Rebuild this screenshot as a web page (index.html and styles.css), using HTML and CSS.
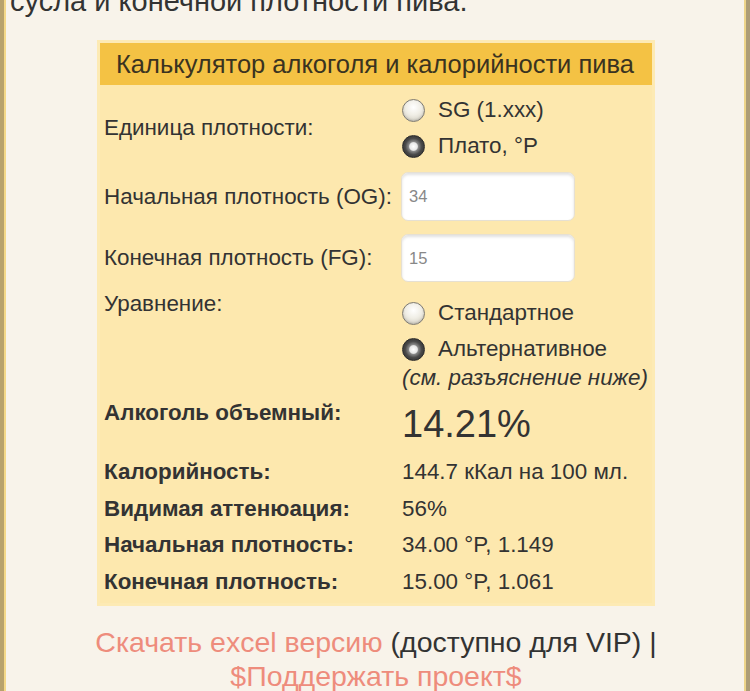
FILE: index.html
```html
<!DOCTYPE html>
<html lang="ru">
<head>
<meta charset="utf-8">
<link rel="stylesheet" href="styles.css">
</head>
<body>
<div class="frame">
  <div class="inner">
    <p class="intro">сусла и конечной плотности пива.</p>
    <div class="calc">
      <div class="calc-head">Калькулятор алкоголя и калорийности пива</div>
      <div class="calc-body">
        <div class="row row-unit">
          <div class="lbl lbl-center">Единица плотности:</div>
          <div class="val">
            <label class="opt"><input type="radio" name="u" class="radio"> SG (1.xxx)</label>
            <label class="opt"><input type="radio" name="u" class="radio" checked> Плато, °P</label>
          </div>
        </div>
        <div class="row row-og">
          <div class="lbl lbl-center">Начальная плотность (OG):</div>
          <div class="val"><input type="text" class="field field-og" value="34"></div>
        </div>
        <div class="row row-fg">
          <div class="lbl lbl-center">Конечная плотность (FG):</div>
          <div class="val"><input type="text" class="field" value="15"></div>
        </div>
        <div class="row row-eq">
          <div class="lbl lbl-top">Уравнение:</div>
          <div class="val val-eq">
            <label class="opt"><input type="radio" name="e" class="radio"> Стандартное</label>
            <label class="opt"><input type="radio" name="e" class="radio" checked> Альтернативное</label>
            <div class="note">(см. разъяснение ниже)</div>
          </div>
        </div>
        <div class="row row-abv">
          <div class="lbl lbl-top bold">Алкоголь объемный:</div>
          <div class="val big">14.21%</div>
        </div>
        <div class="results">
          <div class="row res"><div class="lbl bold">Калорийность:</div><div class="val">144.7 кКал на 100 мл.</div></div>
          <div class="row res"><div class="lbl bold">Видимая аттенюация:</div><div class="val">56%</div></div>
          <div class="row res"><div class="lbl bold">Начальная плотность:</div><div class="val">34.00 °P, 1.149</div></div>
          <div class="row res"><div class="lbl bold">Конечная плотность:</div><div class="val">15.00 °P, 1.061</div></div>
        </div>
      </div>
    </div>
    <p class="links"><a href="#" class="link">Скачать excel версию</a> (доступно для VIP) |<br><a href="#" class="link">$Поддержать проект$</a></p>
  </div>
</div>
</body>
</html>
```

FILE: styles.css
```css
html, body {
  margin: 0;
  padding: 0;
  height: 100%;
  overflow: hidden;
}
body {
  background: #f8f3ea;
  font-family: "Liberation Sans", Arial, sans-serif;
  color: #333;
}
.frame {
  min-height: 100%;
  border-left: 4px solid #b8a26c;
  border-right: 4px solid #ac9c76;
  box-sizing: border-box;
}
.inner {
  min-height: 691px;
  border-left: 2px solid #f4d888;
  border-right: 2px solid #edd48a;
  background: #f8f3ea;
  padding-left: 5px;
  padding-right: 3px;
  box-sizing: border-box;
}
.intro {
  margin: -17px 0 21px -1px;
  font-size: 29px;
  line-height: 36px;
  color: #333;
  white-space: nowrap;
}
.calc {
  width: 552px;
  margin: 0 auto;
  border: 3px solid #fdeab4;
  background: #fde8ae;
}
.calc-head {
  background: #f4c244;
  height: 42px;
  line-height: 42px;
  font-size: 25.5px;
  color: #3a3320;
  padding-left: 16px;
  white-space: nowrap;
}
.calc-body {
  padding: 7px 0 3px 4px;
  font-size: 22.4px;
  color: #333;
}
.row {
  display: grid;
  grid-template-columns: 296px 1fr;
}
.lbl {
  white-space: nowrap;
}
.lbl-center {
  align-self: center;
}
.lbl-top {
  line-height: 22px;
}
.bold {
  font-weight: bold;
}
.opt {
  display: flex;
  align-items: center;
  height: 36px;
  gap: 13px;
  padding-left: 2px;
  font-size: 22.4px;
  white-space: nowrap;
}
.radio {
  appearance: none;
  -webkit-appearance: none;
  margin: 0;
  width: 23px;
  height: 23px;
  border-radius: 50%;
  border: 1px solid #7d7a72;
  background: radial-gradient(circle at 50% 35%, #ffffff 0%, #f0eee6 45%, #c9c5b8 100%);
  box-shadow: inset 0 -1px 2px rgba(0,0,0,0.15);
  box-sizing: border-box;
  flex: none;
}
.radio:checked {
  border-color: #2c2c2c;
  background: radial-gradient(circle at 50% 50%, #ffffff 0%, #e6e6e6 26%, #888 33%, #4a4a4a 55%, #222 100%);
  box-shadow: none;
}
.row-og {
  margin-top: 8px;
}
.row-fg {
  margin-top: 13px;
}
.field {
  width: 174px;
  height: 49px;
  box-sizing: border-box;
  margin-left: 1px;
  border: 1px solid #e6e0d2;
  border-radius: 7px;
  background: #fff;
  box-shadow: inset 0 2px 3px rgba(0,0,0,0.12);
  font-family: "Liberation Sans", Arial, sans-serif;
  font-size: 16.5px;
  color: #888;
  padding: 0 7px;
  outline: none;
}
.row-fg .field {
  height: 48px;
}
.row-eq {
  margin-top: 11px;
}
.val-eq {
  padding-top: 2px;
}
.note {
  font-style: italic;
  line-height: 22px;
  padding-left: 2px;
  white-space: nowrap;
}
.row-abv {
  margin-top: 13px;
}
.big {
  font-size: 38px;
  line-height: 44px;
  padding-left: 2px;
}
.results {
  margin-top: 8px;
}
.res {
  line-height: 36.5px;
}
.res .val {
  padding-left: 2px;
  white-space: nowrap;
}
.links {
  margin: 19px 0 0;
  text-align: center;
  font-size: 28.5px;
  line-height: 34px;
  color: #333;
  white-space: nowrap;
}
.link {
  color: #ee8c7c;
  text-decoration: none;
}
```
